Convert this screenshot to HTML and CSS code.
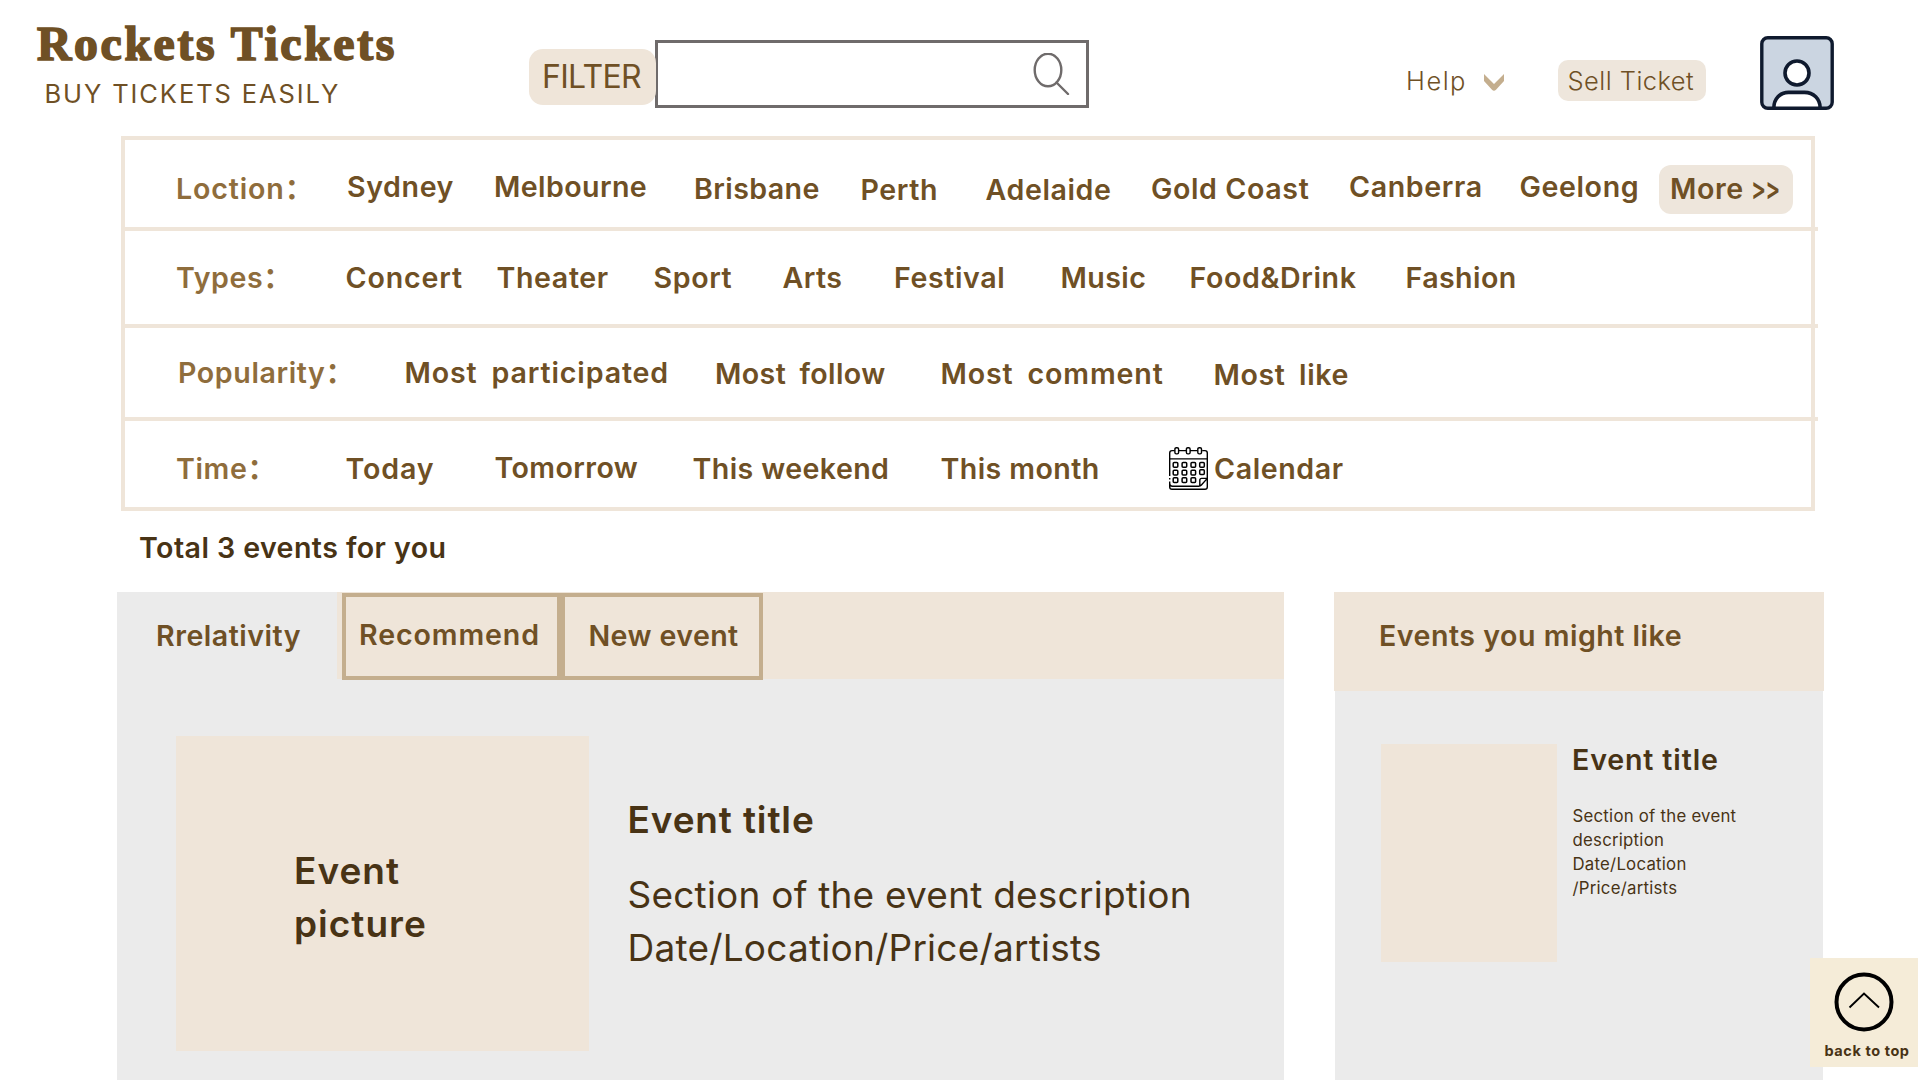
FILE: index.html
```html
<!DOCTYPE html>
<html lang="en">
<head>
<meta charset="utf-8">
<title>Rockets Tickets</title>
<link rel="stylesheet" href="styles.css">
</head>
<body>
<header class="header">
  <div class="brand">
    <div class="brand-name">Rockets Tickets</div>
    <div class="brand-tagline">BUY TICKETS EASILY</div>
  </div>
  <button class="filter-button">FILTER</button>
  <div class="search">
    <svg class="search-icon" viewBox="0 0 38 42" fill="none" stroke="#6f6b6b" stroke-width="2.4" stroke-linecap="round">
      <ellipse cx="15" cy="17" rx="13.3" ry="16.3"/>
      <path d="M23.5 29.5L35 41"/>
    </svg>
  </div>
  <nav class="actions">
    <a class="help">Help
      <svg class="help-arrow" viewBox="0 0 20 17"><path d="M0 0L10 10L20 0V7L12 15.8Q10 17.6 8 15.8L0 7Z" fill="#c4ae8e"/></svg>
    </a>
    <a class="sell">Sell Ticket</a>
    <svg class="avatar" viewBox="0 0 74 74" stroke="#0f1a2e">
      <rect x="1.8" y="1.8" width="70.4" height="70.4" rx="6" fill="#cbd5e1" stroke-width="3.4"/>
      <circle cx="37" cy="37" r="12" fill="#fff" stroke-width="3.6"/>
      <path d="M13.8 72.2C13.8 63 20 56.4 28.5 56.4H44.5C53.5 56.4 60.2 63 60.2 72.2Z" fill="#fff" stroke-width="3.6"/>
    </svg>
  </nav>
</header>

<section class="filters">
  <div class="filter-row row-location">
    <span class="label low wide">Loction：</span>
    <a>Sydney</a><a class="tight">Melbourne</a><a class="low tight">Brisbane</a><a class="lower">Perth</a><a class="lower">Adelaide</a><a class="low">Gold Coast</a><a>Canberra</a><a>Geelong</a>
    <a class="more">More <span class="more-arrows">&gt;&gt;</span></a>
  </div>
  <div class="filter-row row-types">
    <span class="label">Types：</span>
    <a class="wide">Concert</a><a>Theater</a><a>Sport</a><a class="tight">Arts</a><a>Festival</a><a class="tight">Music</a><a>Food&amp;Drink</a><a class="tight">Fashion</a>
  </div>
  <div class="filter-row row-popularity">
    <span class="label">Popularity：</span>
    <a class="wide">Most&nbsp; participated</a><a class="low tight">Most&nbsp; follow</a><a class="low wide">Most&nbsp; comment</a><a class="lower">Most&nbsp; like</a>
  </div>
  <div class="filter-row row-time">
    <span class="label low">Time：</span>
    <a class="low wide">Today</a><a class="tight">Tomorrow</a><a class="low tight">This weekend</a><a class="low tight">This month</a>
    <a class="calendar low">
      <svg class="calendar-icon" viewBox="0 0 39 43" fill="none" stroke="#000" stroke-width="1.4" stroke-linejoin="round">
        <path d="M5.8 3.6H3Q.7 3.6 .7 6V29M.7 31V32.4M.7 34.4V40Q.7 42.3 3 42.3H36Q38.3 42.3 38.3 40V6Q38.3 3.6 36 3.6H33.2M9.4 3.6H17.4M21 3.6H28.6M.7 11.9H38.3M.7 36.5Q.7 39.2 3.4 39.2H29.5Q31.4 39.2 32.4 38L38.3 31.4H32.6Q30.8 31.4 30.8 33.2V39"/>
        <rect x="5.9" y=".7" width="3.7" height="6.2" rx="1.4"/>
        <rect x="17.4" y=".7" width="3.7" height="6.2" rx="1.4"/>
        <rect x="28.8" y=".7" width="3.7" height="6.2" rx="1.4"/>
        <g stroke-width="1.5">
          <rect x="4.2" y="15.4" width="4.6" height="4.8" rx="1"/><rect x="13.1" y="15.4" width="4.6" height="4.8" rx="1"/><rect x="22" y="15.4" width="4.6" height="4.8" rx="1"/><rect x="30.7" y="15.4" width="4.6" height="4.8" rx="1"/>
          <rect x="4.2" y="23.3" width="4.6" height="4.8" rx="1"/><rect x="13.1" y="23.3" width="4.6" height="4.8" rx="1"/><rect x="22" y="23.3" width="4.6" height="4.8" rx="1"/><rect x="30.7" y="22.8" width="4.6" height="4.8" rx="1"/>
          <rect x="4.2" y="30.8" width="4.6" height="4.8" rx="1"/><rect x="13.1" y="30.8" width="4.6" height="4.8" rx="1"/><rect x="22" y="30.8" width="4.6" height="4.8" rx="1"/>
        </g>
      </svg>
      Calendar
    </a>
  </div>
</section>

<h2 class="total">Total 3 events for you</h2>

<main class="content">
  <section class="results">
    <div class="tabs">
      <a class="tab tab-active">Rrelativity</a>
      <a class="tab tab-boxed tab-recommend">Recommend</a>
      <a class="tab tab-boxed tab-new">New event</a>
    </div>
    <article class="event">
      <div class="event-picture">Event<br>picture</div>
      <div class="event-info">
        <h3 class="event-title">Event title</h3>
        <p class="event-text">Section of the event description<br>Date/Location/Price/artists</p>
      </div>
    </article>
  </section>
  <aside class="suggestions">
    <h2 class="suggestions-title">Events you might like</h2>
    <article class="suggestion">
      <div class="suggestion-picture"></div>
      <div class="suggestion-info">
        <h3 class="suggestion-name">Event title</h3>
        <p class="suggestion-text">Section of the event<br>description<br>Date/Location<br>/Price/artists</p>
      </div>
    </article>
  </aside>
</main>

<a class="back-to-top">
  <svg class="back-icon" viewBox="0 0 60 60" fill="none" stroke="#000">
    <circle cx="30" cy="30" r="27.5" stroke-width="4"/>
    <path d="M15.5 35.5L30 21.5L45 35.5" stroke-width="1.9"/>
  </svg>
  <span>back to top</span>
</a>
</body>
</html>
```
FILE: styles.css
```css
* { box-sizing: border-box; }

body {
  margin: 0;
  width: 1920px;
  height: 1080px;
  overflow: hidden;
  background: #fff;
  color: #6f5025;
  font: 600 28.6px/34px Inter, "Noto Sans CJK SC", sans-serif;
  letter-spacing: .6px;
}

h2, h3, p { margin: 0; font: inherit; }

/* Header */
.header { display: flex; align-items: flex-start; height: 136px; }
.brand { width: 529px; padding: 17px 0 0 37px; white-space: nowrap; }
.brand-name {
  font: 700 47.7px/54px "Liberation Serif", serif;
  letter-spacing: 2.65px;
  -webkit-text-stroke: 1.7px currentColor;
}
.brand-tagline { margin: 8px 0 0 7.5px; font-size: 25.5px; font-weight: 400; line-height: 30px; letter-spacing: 1.9px; }

.filter-button {
  width: 127px;
  height: 56px;
  margin-top: 49px;
  padding: 0 0 0 13px;
  border: 0;
  border-radius: 14px;
  background: #efe5d9;
  color: inherit;
  font: 400 32px/56px Inter, sans-serif;
  letter-spacing: -.68px;
  text-align: left;
  z-index: 1;
}
.search {
  display: flex;
  justify-content: flex-end;
  width: 434px;
  height: 68px;
  margin: 40px 0 0 -1px;
  padding: 10px 15px 0 0;
  border: 3px solid #6f6b6b;
}
.search-icon { width: 38px; height: 42px; }

.actions { display: flex; align-items: flex-start; margin-left: 317px; font-size: 25.5px; font-weight: 350; }
.help { display: flex; gap: 17px; width: 151.5px; margin-top: 66px; line-height: 30px; letter-spacing: 1.5px; }
.help-arrow { width: 20px; height: 17px; margin-top: 8px; }
.sell {
  width: 148.5px;
  height: 41px;
  margin-top: 60px;
  padding-left: 10px;
  border-radius: 10px;
  background: #eee6dc;
  line-height: 41px;
  letter-spacing: .45px;
}
.avatar { width: 74px; height: 74px; margin: 36px 0 0 54px; }

/* Filters */
.filters { width: 1694px; height: 375px; margin-left: 121px; border: 4px solid #efe5d9; }
.filter-row {
  display: grid;
  align-items: start;
  margin-right: -7px;
  padding-top: 30px;
  border-bottom: 4px solid #efe5d9;
  white-space: nowrap;
}
.row-location { height: 91px; padding-left: 51px; grid-template-columns: 171px 147px 200px 166.5px 125px 165.5px 198px 170.5px 139.5px 134px; }
.row-types { height: 97px; padding-left: 51px; grid-template-columns: 169.5px 151px 157px 129px 111.5px 166.5px 129px 216px 120px; }
.row-popularity { height: 93px; padding: 28px 0 0 53px; grid-template-columns: 226.5px 310.5px 225.5px 273px 150px; }
.row-time { height: 86px; padding-left: 51px; border-bottom: 0; grid-template-columns: 169.5px 149px 198px 248px 228.5px 180px; }
.row-popularity a { word-spacing: -1px; }
.label { color: #8f6d3c; }
.low { margin-top: 1px; }
.row-location .low { margin-top: 2px; }
.lower { margin-top: 3px; }
.row-popularity .lower { margin-top: 2px; }
.wide { letter-spacing: .85px; }
.tight { letter-spacing: .4px; }
.more {
  height: 49px;
  margin-top: -5px;
  padding-left: 11px;
  border-radius: 12px;
  background: #eee6dc;
  line-height: 48px;
}
.more-arrows {
  display: inline-block;
  margin-left: -1px;
  font-feature-settings: "calt" 0;
  letter-spacing: -1px;
  transform: scale(.78, 1.1);
  transform-origin: left 52%;
}
.calendar { display: flex; gap: 6px; }
.calendar-icon { width: 39px; height: 43px; margin-top: -5px; }

/* Results */
.total { margin: 20px 0 0 139px; color: #483315; letter-spacing: .42px; }
.content { display: flex; gap: 50px; margin: 27px 0 0 117px; height: 488px; }
.results { width: 1167px; background: #ebebeb; }
.tabs { display: flex; height: 87px; background: #efe5d9; }
.tab { height: 87px; }
.tab-active { width: 220px; margin-right: 4.5px; padding: 27px 0 0 39px; background: #ebebeb; letter-spacing: .5px; }
.tab-boxed { margin-top: 1px; border: 4px solid #c4ae8e; }
.tab-recommend { width: 219.5px; padding: 21px 0 0 13.5px; letter-spacing: .88px; }
.tab-new { width: 202px; padding: 22px 0 0 23.5px; letter-spacing: .4px; }

.event { display: flex; padding: 57px 0 0 59px; color: #483315; font-size: 37px; line-height: 53px; }
.event-picture { width: 413px; height: 314.5px; padding: 108px 0 0 118px; background: #efe5d9; letter-spacing: 1px; }
.event-info { padding: 57px 0 0 38.5px; }
.event-title { letter-spacing: .85px; }
.event-text { margin-top: 22px; font-weight: 400; letter-spacing: .22px; white-space: nowrap; }

/* Sidebar */
.suggestions { width: 490px; padding: 0 1px; background: #ebebeb content-box; }
.suggestions-title { height: 98.5px; margin: 0 -1px; padding: 27px 0 0 45px; background: #efe5d9; letter-spacing: .5px; }
.suggestion { display: flex; gap: 15px; padding: 53.5px 0 0 46px; color: #483315; }
.suggestion-picture { width: 176px; height: 218px; background: #efe5d9; }
.suggestion-name { margin-top: -1px; letter-spacing: .85px; }
.suggestion-text { margin: 27px 0 0 .5px; font-size: 16.8px; font-weight: 400; line-height: 24px; letter-spacing: .24px; white-space: nowrap; }

/* Floating button */
.back-to-top {
  position: fixed;
  left: 1810px;
  top: 958px;
  display: flex;
  flex-direction: column;
  align-items: center;
  width: 107.5px;
  height: 108.5px;
  padding-top: 13.5px;
  background: #f5ecd8;
  color: #483315;
  font-size: 14.5px;
  font-weight: 700;
  line-height: 18px;
  letter-spacing: .58px;
}
.back-icon { width: 60px; height: 60px; margin-left: 1px; }
.back-to-top span { margin: 10.5px 0 0 6.5px; }
```
